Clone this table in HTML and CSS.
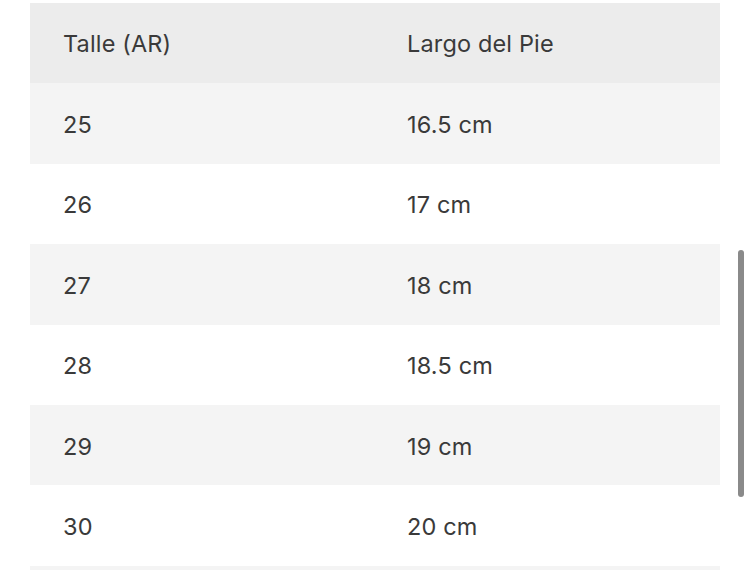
FILE: index.html
```html
<!DOCTYPE html>
<html lang="es">
<head>
<meta charset="utf-8">
<title>Guía de talles</title>
<link rel="stylesheet" href="styles.css">
</head>
<body>
<div class="wrap">
  <table class="sizes">
    <thead>
      <tr><th>Talle (AR)</th><th>Largo del Pie</th></tr>
    </thead>
    <tbody>
      <tr><td>25</td><td>16.5 cm</td></tr>
      <tr><td>26</td><td>17 cm</td></tr>
      <tr><td>27</td><td>18 cm</td></tr>
      <tr><td>28</td><td>18.5 cm</td></tr>
      <tr><td>29</td><td>19 cm</td></tr>
      <tr><td>30</td><td>20 cm</td></tr>
      <tr class="next"><td></td><td></td></tr>
    </tbody>
  </table>
  <div class="scrollbar"></div>
</div>
</body>
</html>
```
FILE: styles.css
```css
html, body {
  margin: 0;
  padding: 0;
  overflow: hidden;
  background: #ffffff;
}
body {
  font-family: Inter, "Open Sans", "Liberation Sans", sans-serif;
  color: #3a3a3a;
}
.wrap {
  position: relative;
  width: 750px;
  height: 570px;
  overflow: hidden;
  padding: 3px 0 0 30px;
  box-sizing: border-box;
}
.sizes {
  width: 690px;
  border-collapse: collapse;
  table-layout: fixed;
}
.sizes th,
.sizes td {
  height: 80.4px;
  padding: 2px 0 0 33px;
  text-align: left;
  font-size: 23.5px;
  font-weight: 400;
  letter-spacing: 0.15px;
  vertical-align: middle;
  box-sizing: border-box;
}
.sizes th {
  padding-top: 0;
}
.sizes th:last-child,
.sizes td:last-child {
  padding-left: 32px;
}
.sizes thead tr {
  background: #ececec;
}
.sizes tbody tr:nth-child(odd) {
  background: #f4f4f4;
}
.scrollbar {
  position: absolute;
  left: 738px;
  top: 250px;
  width: 6px;
  height: 247px;
  border-radius: 3px;
  background: #8a8a8a;
}
```
